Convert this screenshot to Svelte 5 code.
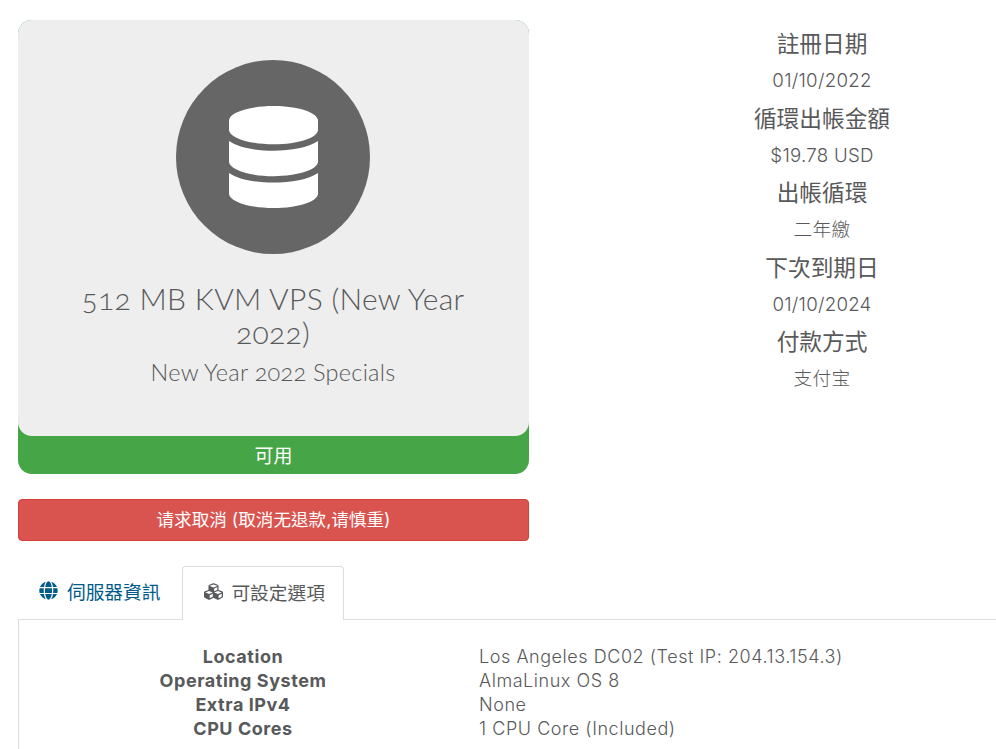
<script>
  const billing = [
    { label: '註冊日期', value: '01/10/2022' },
    { label: '循環出帳金額', value: '$19.78 USD' },
    { label: '出帳循環', value: '二年繳' },
    { label: '下次到期日', value: '01/10/2024' },
    { label: '付款方式', value: '支付宝' }
  ];

  const options = [
    { label: 'Location', value: 'Los Angeles DC02 (Test IP: 204.13.154.3)' },
    { label: 'Operating System', value: 'AlmaLinux OS 8' },
    { label: 'Extra IPv4', value: 'None' },
    { label: 'CPU Cores', value: '1 CPU Core (Included)' }
  ];
</script>

<div class="page">
  <div class="top">
    <div class="left">
      <div class="status-card">
        <div class="product">
          <div class="circle">
            <svg class="db" viewBox="0 0 448 512" preserveAspectRatio="none" aria-hidden="true">
              <path d="M448 73.143v45.714C448 159.143 347.667 192 224 192S0 159.143 0 118.857V73.143C0 32.857 100.333 0 224 0s224 32.857 224 73.143zM448 176v102.857C448 319.143 347.667 352 224 352S0 319.143 0 278.857V176c48.125 33.143 136.208 48.572 224 48.572S399.874 209.143 448 176zm0 160v102.857C448 479.143 347.667 512 224 512S0 479.143 0 438.857V336c48.125 33.143 136.208 48.572 224 48.572S399.874 369.143 448 336z" />
            </svg>
          </div>
          <h3>512 MB KVM VPS (New Year 2022)</h3>
          <h4>New Year 2022 Specials</h4>
        </div>
        <div class="status">可用</div>
      </div>
      <button class="cancel">请求取消 (取消无退款,请慎重)</button>
    </div>

    <div class="right">
      {#each billing as item}
        <h4 class="b-label">{item.label}</h4>
        <p class="b-value">{item.value}</p>
      {/each}
    </div>
  </div>

  <ul class="tabs">
    <li class="tab">
      <svg class="ico" viewBox="0 0 496 512" aria-hidden="true">
        <path d="M336.5 160C322 70.7 287.8 8 248 8s-74 62.7-88.5 152h177zM152 256c0 22.2 1.2 43.5 3.3 64h185.3c2.1-20.5 3.3-41.8 3.3-64s-1.2-43.5-3.3-64H155.3c-2.1 20.5-3.3 41.8-3.3 64zm324.7-96c-28.6-67.9-86.5-120.4-158-141.6 24.4 33.8 41.2 84.7 50 141.6h108zM177.2 18.4C105.8 39.6 47.8 92.1 19.3 160h108c8.7-56.9 25.5-107.8 49.9-141.6zM487.4 192H372.7c2.1 21 3.3 42.5 3.3 64s-1.2 43-3.3 64h114.6c5.5-20.5 8.6-41.8 8.6-64s-3.1-43.5-8.5-64zM120 256c0-21.5 1.2-43 3.3-64H8.6C3.2 212.5 0 233.8 0 256s3.2 43.5 8.6 64h114.6c-2-21-3.2-42.5-3.2-64zm39.5 96c14.5 89.3 48.7 152 88.5 152s74-62.7 88.5-152h-177zm159.3 141.6c71.4-21.2 129.4-73.7 158-141.6h-108c-8.8 56.9-25.6 107.8-50 141.6zM19.3 352c28.6 67.9 86.5 120.4 158 141.6-24.4-33.8-41.2-84.7-50-141.6h-108z" />
      </svg>
      伺服器資訊
    </li>
    <li class="tab active">
      <svg class="ico" viewBox="0 0 512 512" aria-hidden="true">
        <path d="M488.6 250.2L392 214V105.5c0-15-9.3-28.4-23.4-33.7l-100-37.5c-8.1-3.1-17.1-3.1-25.3 0l-100 37.5c-14.1 5.3-23.4 18.7-23.4 33.7V214l-96.6 36.2C9.3 255.5 0 268.9 0 283.9V394c0 13.6 7.7 26.1 19.9 32.2l100 50c10.1 5.1 22.1 5.1 32.2 0l103.9-52 103.9 52c10.1 5.1 22.1 5.1 32.2 0l100-50c12.2-6.1 19.9-18.6 19.9-32.2V283.9c0-15-9.3-28.4-23.4-33.7zM358 214.8l-85 31.9v-68.2l85-37v73.3zM154 104.1l102-38.2 102 38.2v.6l-102 41.4-102-41.4v-.6zm84 291.1l-85 42.5v-79.1l85-38.8v75.4zm0-112l-102 41.4-102-41.4v-.6l102-38.2 102 38.2v.6zm240 112l-85 42.5v-79.1l85-38.8v75.4zm0-112l-102 41.4-102-41.4v-.6l102-38.2 102 38.2v.6z" />
      </svg>
      可設定選項
    </li>
  </ul>

  <div class="pane">
    {#each options as opt}
      <div class="opt">
        <strong>{opt.label}</strong>
        <span>{opt.value}</span>
      </div>
    {/each}
  </div>
</div>

<style>
  :global(body) {
    margin: 0;
    overflow: hidden;
    background: #fff;
  }

  .page {
    width: 996px;
    height: 749px;
    overflow: hidden;
    box-sizing: border-box;
    padding: 20px 0 0 18px;
    color: #58595b;
    font-family: Inter, "Noto Sans CJK TC", sans-serif;
  }

  .top {
    display: flex;
    height: 546px;
  }

  .left {
    width: 511px;
    flex: none;
  }

  .status-card {
    background: #46a546;
    border-radius: 14px;
    overflow: hidden;
  }

  .product {
    background: #eee;
    height: 416px;
    box-sizing: border-box;
    padding: 40px 1px 0 0;
    border-radius: 0 0 14px 14px;
    text-align: center;
    font-family: Lato, "Noto Sans CJK TC", sans-serif;
  }

  .circle {
    width: 194px;
    height: 194px;
    margin: 0 auto;
    border-radius: 50%;
    background: #666;
    display: flex;
    align-items: center;
    justify-content: center;
  }

  .db {
    width: 89px;
    height: 102px;
    fill: #fff;
  }

  .product h3 {
    margin: 27px 45px 0;
    font-size: 30px;
    line-height: 34px;
    font-weight: 300;
    letter-spacing: 0.3px;
    font-variant-numeric: oldstyle-nums;
  }

  .product h4 {
    margin: 8px 0 0;
    font-size: 23.5px;
    line-height: 30px;
    font-weight: 300;
    letter-spacing: 0.25px;
    font-variant-numeric: oldstyle-nums;
  }

  .status {
    height: 38px;
    line-height: 41px;
    text-align: center;
    color: #fff;
    font-size: 19px;
  }

  .cancel {
    display: block;
    width: 100%;
    height: 42px;
    margin-top: 25px;
    padding: 0 0 3px;
    background: #d9534f;
    border: 1px solid #d43f3a;
    border-radius: 4px;
    color: #fff;
    font: inherit;
    font-size: 17.6px;
  }

  .right {
    flex: none;
    width: 550px;
    margin-left: 18px;
    padding-top: 5px;
    text-align: center;
  }

  .b-label {
    margin: 0;
    font-size: 22.7px;
    line-height: 37.25px;
    font-weight: 400;
  }

  .b-value {
    margin: 0;
    font-size: 18.7px;
    line-height: 37.25px;
    font-weight: 300;
    letter-spacing: 0.25px;
  }

  .tabs {
    list-style: none;
    display: flex;
    height: 53px;
    margin: 0;
    padding: 0;
  }

  .tab {
    display: flex;
    align-items: center;
    gap: 9px;
    box-sizing: border-box;
    height: 53px;
    padding: 0 22px 4px 21px;
    font-size: 18.7px;
    color: #005b8a;
  }

  .tab .ico {
    width: 19px;
    height: 19px;
    fill: currentColor;
  }

  .tab.active {
    height: 54px;
    gap: 8px;
    padding: 0 18px 4px 21px;
    color: #58595b;
    background: #fff;
    border: 1px solid #ddd;
    border-bottom: 0;
    border-radius: 4px 4px 0 0;
    position: relative;
    z-index: 1;
  }

  .pane {
    border: 1px solid #ddd;
    border-right: 0;
    padding: 25px 0 0;
    height: 200px;
    box-sizing: border-box;
  }

  .opt {
    display: grid;
    grid-template-columns: 448px 1fr;
    column-gap: 12px;
    font-size: 18px;
    line-height: 24px;
    letter-spacing: 0.55px;
  }

  .opt strong {
    text-align: center;
    font-weight: 700;
  }

  .opt span {
    font-weight: 300;
  }
</style>
